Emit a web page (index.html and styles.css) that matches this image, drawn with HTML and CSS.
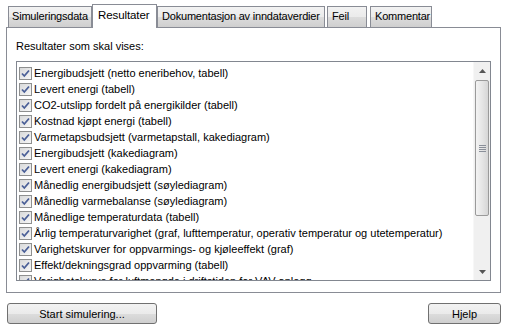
FILE: index.html
```html
<!DOCTYPE html>
<html lang="no">
  <head>
    <meta charset="UTF-8" />
    <title>Simulering</title>
    <link rel="stylesheet" href="styles.css">
  </head>
  <body>
    <div class="dialog">
      <div class="tabs">
        <div class="tab tab-sim">Simuleringsdata</div>
        <div class="tab tab-res active">Resultater</div>
        <div class="tab tab-dok">Dokumentasjon av inndataverdier</div>
        <div class="tab tab-feil">Feil</div>
        <div class="tab tab-kom">Kommentar</div>
      </div>

      <div class="panel">
        <p class="panel-label">Resultater som skal vises:</p>
        <div class="listbox">
          <ul class="items">
            <li><span class="check"></span>Energibudsjett (netto eneribehov, tabell)</li>
            <li><span class="check"></span>Levert energi (tabell)</li>
            <li><span class="check"></span>CO2-utslipp fordelt på energikilder (tabell)</li>
            <li><span class="check"></span>Kostnad kjøpt energi (tabell)</li>
            <li><span class="check"></span>Varmetapsbudsjett (varmetapstall, kakediagram)</li>
            <li><span class="check"></span>Energibudsjett (kakediagram)</li>
            <li><span class="check"></span>Levert energi (kakediagram)</li>
            <li><span class="check"></span>Månedlig energibudsjett (søylediagram)</li>
            <li><span class="check"></span>Månedlig varmebalanse (søylediagram)</li>
            <li><span class="check"></span>Månedlige temperaturdata (tabell)</li>
            <li><span class="check"></span>Årlig temperaturvarighet (graf, lufttemperatur, operativ temperatur og utetemperatur)</li>
            <li><span class="check"></span>Varighetskurver for oppvarmings- og kjøleeffekt (graf)</li>
            <li><span class="check"></span>Effekt/dekningsgrad oppvarming (tabell)</li>
            <li><span class="check"></span>Varighetskurve for luftmengde i driftstiden for VAV-anlegg</li>
          </ul>
          <div class="scrollbar">
            <div class="arrow">
              <svg width="7" height="4" viewBox="0 0 7 4"><path d="M0 4 L3.5 0 L7 4 Z" fill="#555"/></svg>
            </div>
            <div class="track">
              <div class="thumb">
                <svg width="7" height="7" viewBox="0 0 7 7"><path d="M0 0.5 H7 M0 2.5 H7 M0 4.5 H7 M0 6.5 H7" stroke="#8a8f99" stroke-width="1"/></svg>
              </div>
            </div>
            <div class="arrow">
              <svg width="7" height="4" viewBox="0 0 7 4"><path d="M0 0 L3.5 4 L7 0 Z" fill="#555"/></svg>
            </div>
          </div>
        </div>
      </div>

      <div class="buttons">
        <button class="btn btn-start">Start simulering...</button>
        <button class="btn btn-help">Hjelp</button>
      </div>
    </div>
  </body>
</html>
```

FILE: styles.css
```css
* {
  margin: 0;
  padding: 0;
  box-sizing: border-box;
}

body {
  font-family: 'Liberation Sans', Arial, sans-serif;
  font-size: 11px;
  color: #000;
  background-color: #fff;
}

.dialog {
  width: 508px;
  height: 334px;
  padding: 3px 7px 0 6px;
}

.tabs {
  display: flex;
  align-items: flex-end;
  height: 24px;
  padding-left: 2px;
  position: relative;
  z-index: 1;
}

.tab {
  height: 21px;
  line-height: 19px;
  padding: 0 4px;
  border: 1px solid #898c95;
  border-bottom: none;
  background: linear-gradient(#f2f2f2, #ebebeb 50%, #dcdcdc 51%, #cfcfcf);
  white-space: nowrap;
  overflow: hidden;
  letter-spacing: -0.2px;
}

.tab.active {
  height: 24px;
  line-height: 20px;
  padding: 0 5px;
  margin-bottom: -1px;
  background: #fff;
  font-size: 11.5px;
  letter-spacing: -0.1px;
}

.tab-sim {
  width: 84px;
  padding-left: 3px;
}

.tab-res {
  width: 65px;
}

.tab-dok {
  width: 168px;
}

.tab-feil {
  width: 40px;
  margin-left: 2px;
}

.tab-kom {
  width: 62px;
  margin-left: 3px;
}

.panel {
  height: 266px;
  border: 1px solid #898c95;
  background: #fff;
  padding: 12px 9px 0 9px;
}

.panel-label {
  line-height: 13px;
  margin-bottom: 8px;
}

.listbox {
  display: flex;
  height: 220px;
  border: 1px solid #828790;
  overflow: hidden;
}

.items {
  flex: 1;
  list-style: none;
  padding: 3px 0 0 2px;
  overflow: hidden;
}

.items li {
  display: flex;
  align-items: center;
  height: 16px;
  white-space: nowrap;
}

.check {
  width: 13px;
  height: 13px;
  flex: none;
  margin-right: 2px;
  border: 1px solid #8e8f8f;
  background:
    url("data:image/svg+xml,%3Csvg xmlns='http://www.w3.org/2000/svg' width='11' height='11'%3E%3Cpath d='M2 5.5 L4.3 8 L9 2.5' fill='none' stroke='%234a5f97' stroke-width='1.8'/%3E%3C/svg%3E") center / 11px 11px no-repeat,
    linear-gradient(135deg, #d8d9da, #f7f7f7);
}

.scrollbar {
  width: 17px;
  flex: none;
  display: flex;
  flex-direction: column;
  background: #f0f0f0;
  border-left: 1px solid #f7f7f7;
}

.arrow {
  height: 17px;
  display: flex;
  align-items: center;
  justify-content: center;
}

.track {
  flex: 1;
  padding: 1px 0 47px;
  display: flex;
}

.thumb {
  flex: 1;
  margin: 0 1px;
  border: 1px solid #9a9a9a;
  border-radius: 2px;
  background: linear-gradient(to right, #f3f3f3, #e6e6e6 50%, #d6d6d6);
  display: flex;
  align-items: center;
  justify-content: center;
}

.buttons {
  display: flex;
  justify-content: space-between;
  margin-top: 10px;
  padding-left: 1px;
}

.btn {
  height: 21px;
  font-family: inherit;
  font-size: 11px;
  color: #000;
  border: 1px solid #707070;
  border-radius: 3px;
  background: linear-gradient(#f2f2f2, #ebebeb 50%, #dddddd 51%, #cfcfcf);
}

.btn-start {
  width: 150px;
}

.btn-help {
  width: 73px;
}
```
